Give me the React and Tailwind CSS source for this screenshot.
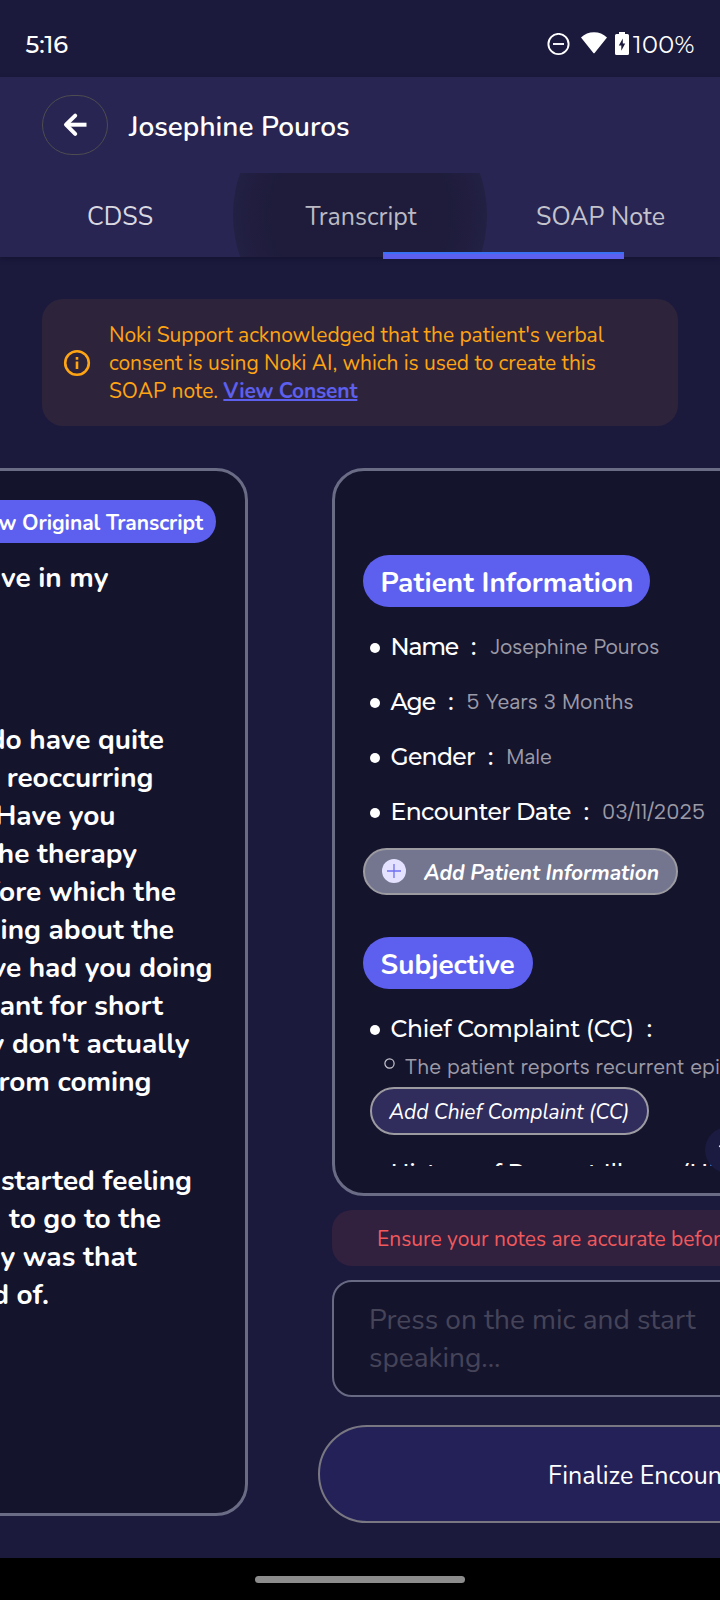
const transcript = [
  { text: "I have in my", cls: "mt-[16px] mr-[136.500px]" },
  { text: "You do have quite", cls: "mt-[124px] mr-[81px]" },
  { text: "a bit reoccurring", cls: "mr-[91.500px]" },
  { text: "pain. Have you", cls: "mr-[129.500px]" },
  { text: "been to the therapy", cls: "mr-[108px]" },
  { text: "before which the", cls: "mr-[69px]" },
  { text: "talking about the", cls: "mr-[71px]" },
  { text: "have had you doing", cls: "mr-[32.500px]" },
  { text: "are meant for short", cls: "mr-[82px]" },
  { text: "they don't actually", cls: "mr-[55.500px]" },
  { text: "keep it from coming", cls: "mr-[93.500px]" },
  { text: "I started feeling", cls: "mt-[61px] mr-[53px]" },
  { text: "to go to the", cls: "mr-[84px]" },
  { text: "today was that", cls: "mr-[108.500px]" },
  { text: "afraid of.", cls: "mr-[196px]" },
];

function StatusBar() {
  return (
    <div className="flex h-[77px] shrink-0 items-start justify-between pt-[33px] pr-[25px] pl-[25.500px] font-['Montserrat','Inter',sans-serif] text-[24px] leading-6 font-medium text-white">
      <span className="tracking-[-0.1px]">5:16</span>
      <div className="flex items-start">
        <svg className="mr-[11px] h-[23px] w-[23px]" viewBox="0 0 23 23" fill="none" stroke="#fff" strokeWidth="1.9">
          <circle cx="11.5" cy="11" r="10.1" />
          <path d="M6 11h11" />
        </svg>
        <svg className="mt-[-1px] mr-[8px] h-[22px] w-[26px]" viewBox="0 0 26 22" fill="#fff">
          <path d="M0 5.6C3.6 2 8 .3 13 .3S22.400 2 26 5.600L13.800 20.800q-.8 1-1.600 0Z" />
        </svg>
        <svg className="mt-[-1px] mr-[4px] h-[23px] w-[14px]" viewBox="0 0 14 23">
          <path fill="#fff" d="M4 0h6v2h2.500A1.500 1.500 0 0 1 14 3.500v18a1.500 1.500 0 0 1-1.500 1.500h-11A1.500 1.500 0 0 1 0 21.500v-18A1.500 1.500 0 0 1 1.500 2H4Z" />
          <path fill="#1b1a3c" d="M7.800 6.500 3.800 13.500h2.500v5.200L10.200 11.500H7.800Z" />
        </svg>
        <span className="w-[62px] font-normal tracking-[0.35px] whitespace-nowrap">100%</span>
      </div>
    </div>
  );
}

function Header() {
  return (
    <div className="relative z-10 shrink-0 bg-[#282552] shadow-[0_2px_5px_rgba(10,10,30,0.35)]">
      <div className="flex h-24 items-start pt-[18px] pl-[42px]">
        <button className="flex h-[60px] w-[66px] items-center justify-center rounded-[30px] border border-[#4d4c50]">
          <svg className="h-[26px] w-[26px]" viewBox="0 0 26 26" fill="none" stroke="#fff" strokeWidth="4">
            <path d="M4 12.700h20.500" />
            <path d="M13.200 3.600 4 12.700l9.200 9.200" strokeLinecap="round" strokeLinejoin="round" />
          </svg>
        </button>
        <h1 className="mt-[13px] ml-[21px] text-[28px] leading-[38px] font-[600] text-white">Josephine Pouros</h1>
      </div>
      <div className="relative grid h-[84px] grid-cols-3 overflow-hidden text-center text-[25px] leading-[88px]">
        <div className="absolute -top-[85px] left-[233px] h-[254px] w-[254px] rounded-full bg-[radial-gradient(closest-side,#1e1c3a_68%,#201d3f_84%,#222043_100%)]" />
        <span className="relative text-[#dad9e1]">CDSS</span>
        <span className="relative pl-[2px] text-[#bbbac4]">Transcript</span>
        <span className="relative pl-[1px] text-[#c4c3cc]">SOAP Note</span>
      </div>
      <div className="absolute top-[175px] left-[383px] h-[7px] w-[241px] border-t-2 border-[#3a70f4] bg-[#5d5fef]" />
    </div>
  );
}

function ConsentNotice() {
  return (
    <div className="mx-[42px] mt-[42px] flex h-[127px] shrink-0 items-center rounded-[21px] bg-[#2d243c] pl-[21px]">
      <svg className="mt-[1px] h-[28px] w-[28px] shrink-0" viewBox="0 0 28 28" fill="none" stroke="#ffa412" strokeWidth="2.600">
        <circle cx="14" cy="14" r="11.800" />
        <path d="M14 12.500v7.500M14 8v2.700" />
      </svg>
      <p className="ml-[18px] pt-[1px] text-[21px] leading-[28px] tracking-[-0.05px] whitespace-nowrap text-[#ffa412]">
        Noki Support acknowledged that the patient's verbal
        <br />
        consent is using Noki AI, which is used to create this
        <br />
        SOAP note. <a className="font-bold tracking-[-0.18px] text-[#5d5fef] underline decoration-[1.500px] underline-offset-[1px]">View Consent</a>
      </p>
    </div>
  );
}

function TranscriptCard() {
  return (
    <div className="flex h-[1048px] w-[636px] shrink-0 flex-col items-end rounded-[32px] border-[3px] border-[#6a6b85] bg-[#15142d]">
      <button className="mt-[29px] mr-[29px] flex h-[43px] items-center rounded-full bg-[#5d5fef] px-[13px] pt-[4px] text-[21px] font-bold tracking-[-0.05px] text-white">
        View Original Transcript
      </button>
      {transcript.map((line) => (
        <p key={line.text} className={`text-[28px] leading-[38px] font-bold whitespace-nowrap text-white ${line.cls}`}>
          {line.text}
        </p>
      ))}
    </div>
  );
}

function SectionPill({ className, children }) {
  return (
    <div className={`ml-[28px] flex h-[52px] shrink-0 items-center rounded-full bg-[#5d5fef] pt-[4px] pl-[17.500px] text-[28px] font-bold whitespace-nowrap text-white ${className}`}>
      {children}
    </div>
  );
}

function Field({ label, value, className = "", tracking = "" }) {
  return (
    <div className={`ml-[35px] flex h-[55px] shrink-0 items-center font-['Montserrat','Inter',sans-serif] text-[23.500px] leading-[55px] font-medium whitespace-nowrap text-white ${className}`}>
      <span className="mt-[2px] h-[10px] w-[10px] shrink-0 rounded-full bg-white" />
      <span className={`ml-[10.500px] ${tracking}`}>{label}</span>
      <span className="ml-[13px]">:</span>
      {value && <span className="ml-[13px] font-['Albert_Sans','Inter',sans-serif] text-[21px] font-normal tracking-[-0.05px] text-[#9b9aa6]">{value}</span>}
    </div>
  );
}

function NoteCard() {
  return (
    <div className="relative h-[728px] shrink-0 rounded-[32px] border-[3px] border-[#6a6b85] bg-[#15142d]">
      <div className="flex h-[695px] flex-col items-start overflow-hidden">
        <SectionPill className="mt-[84px] w-[287px]">Patient Information</SectionPill>
        <Field className="mt-3" tracking="tracking-[-1.2px]" label="Name" value="Josephine Pouros" />
        <Field tracking="tracking-[-1px]" label="Age" value="5 Years 3 Months" />
        <Field tracking="tracking-[-0.7px]" label="Gender" value="Male" />
        <Field tracking="tracking-[-0.6px]" label="Encounter Date" value="03/11/2025" />
        <button className="mt-[9px] ml-[28px] flex h-[47px] w-[315px] shrink-0 items-center rounded-full border-2 border-[#9c9ba2] bg-[#74758f] pl-[17px]">
          <svg className="mb-px h-6 w-6" viewBox="0 0 24 24" fill="none" stroke="#6f70f1" strokeWidth="1.300">
            <circle cx="12" cy="12" r="12" fill="#e4e2ff" stroke="none" />
            <path d="M12 5v14M5 12h14" />
          </svg>
          <span className="ml-[18px] pt-[3px] text-[21px] leading-7 font-bold tracking-[-0.05px] whitespace-nowrap text-white italic">Add Patient Information</span>
        </button>
        <SectionPill className="mt-[42px] w-[170px]">Subjective</SectionPill>
        <Field className="mt-3" tracking="tracking-[-0.25px]" label="Chief Complaint (CC)" />
        <div className="ml-[49px] flex h-[22px] shrink-0 items-center font-['Albert_Sans','Inter',sans-serif] text-[21px] leading-[22px] whitespace-nowrap text-[#9b9aa6]">
          <svg className="mb-[7px] h-[11px] w-[11px]" viewBox="0 0 11 11" fill="none" stroke="#c9c8d0" strokeWidth="1.200">
            <circle cx="5.5" cy="5.5" r="4.600" />
          </svg>
          <span className="ml-[9.500px]">The patient reports recurrent episodes of pain</span>
        </div>
        <button className="mt-[9px] ml-[35px] flex h-12 w-[279px] shrink-0 items-center rounded-full border-2 border-[#9c9ba2] bg-[#302c5c] pt-[4px] pl-[17px] text-[21px] tracking-[-0.1px] whitespace-nowrap text-white italic">
          Add Chief Complaint (CC)
        </button>
        <Field className="mt-[10px]" tracking="tracking-[-0.3px]" label="History of Present Illness (HPI)" />
      </div>
      <button className="absolute top-[656px] left-[370px] flex h-[46px] w-[46px] items-center justify-center rounded-full bg-[#1b1a40]">
        <svg className="h-5 w-5" viewBox="0 0 20 20" fill="none" stroke="#fff" strokeWidth="2">
          <path d="M1.500 5.500 10 14.500l8.500-9" />
        </svg>
      </button>
    </div>
  );
}

function NoteColumn() {
  return (
    <div className="flex w-[636px] shrink-0 flex-col">
      <NoteCard />
      <div className="mt-[14px] flex h-14 shrink-0 items-center rounded-[20px] bg-[#32203f] pt-[4px] pl-[45px] text-[21px] whitespace-nowrap text-[#f05a5c]">
        Ensure your notes are accurate before submitting
      </div>
      <div className="mt-[14px] h-[117px] shrink-0 rounded-[20px] border-2 border-[#686982] bg-[#15142d] pt-[19px] pl-[35px] text-[28px] leading-[38px] text-[#454459]">
        Press on the mic and start
        <br />
        speaking...
      </div>
      <button className="mt-[28px] -ml-[14px] flex h-[98px] w-[664px] shrink-0 items-center rounded-full border-2 border-[#797882] bg-[#242159] pt-[5px] pl-[228px] text-[25px] whitespace-nowrap text-white">
        Finalize Encounter
      </button>
    </div>
  );
}

export default function App() {
  return (
    <div className="flex h-[1600px] w-[720px] flex-col overflow-hidden bg-[#1b1a3d] font-['Nunito','Lato',sans-serif]">
      <StatusBar />
      <Header />
      <ConsentNotice />
      <div className="mt-[42px] -ml-[388px] flex h-[1090px] shrink-0 gap-[84px]">
        <TranscriptCard />
        <NoteColumn />
      </div>
      <div className="flex h-[42px] shrink-0 items-center justify-center bg-black">
        <div className="h-[7px] w-[210px] rounded-full bg-[#8c8c8c]" />
      </div>
    </div>
  );
}
